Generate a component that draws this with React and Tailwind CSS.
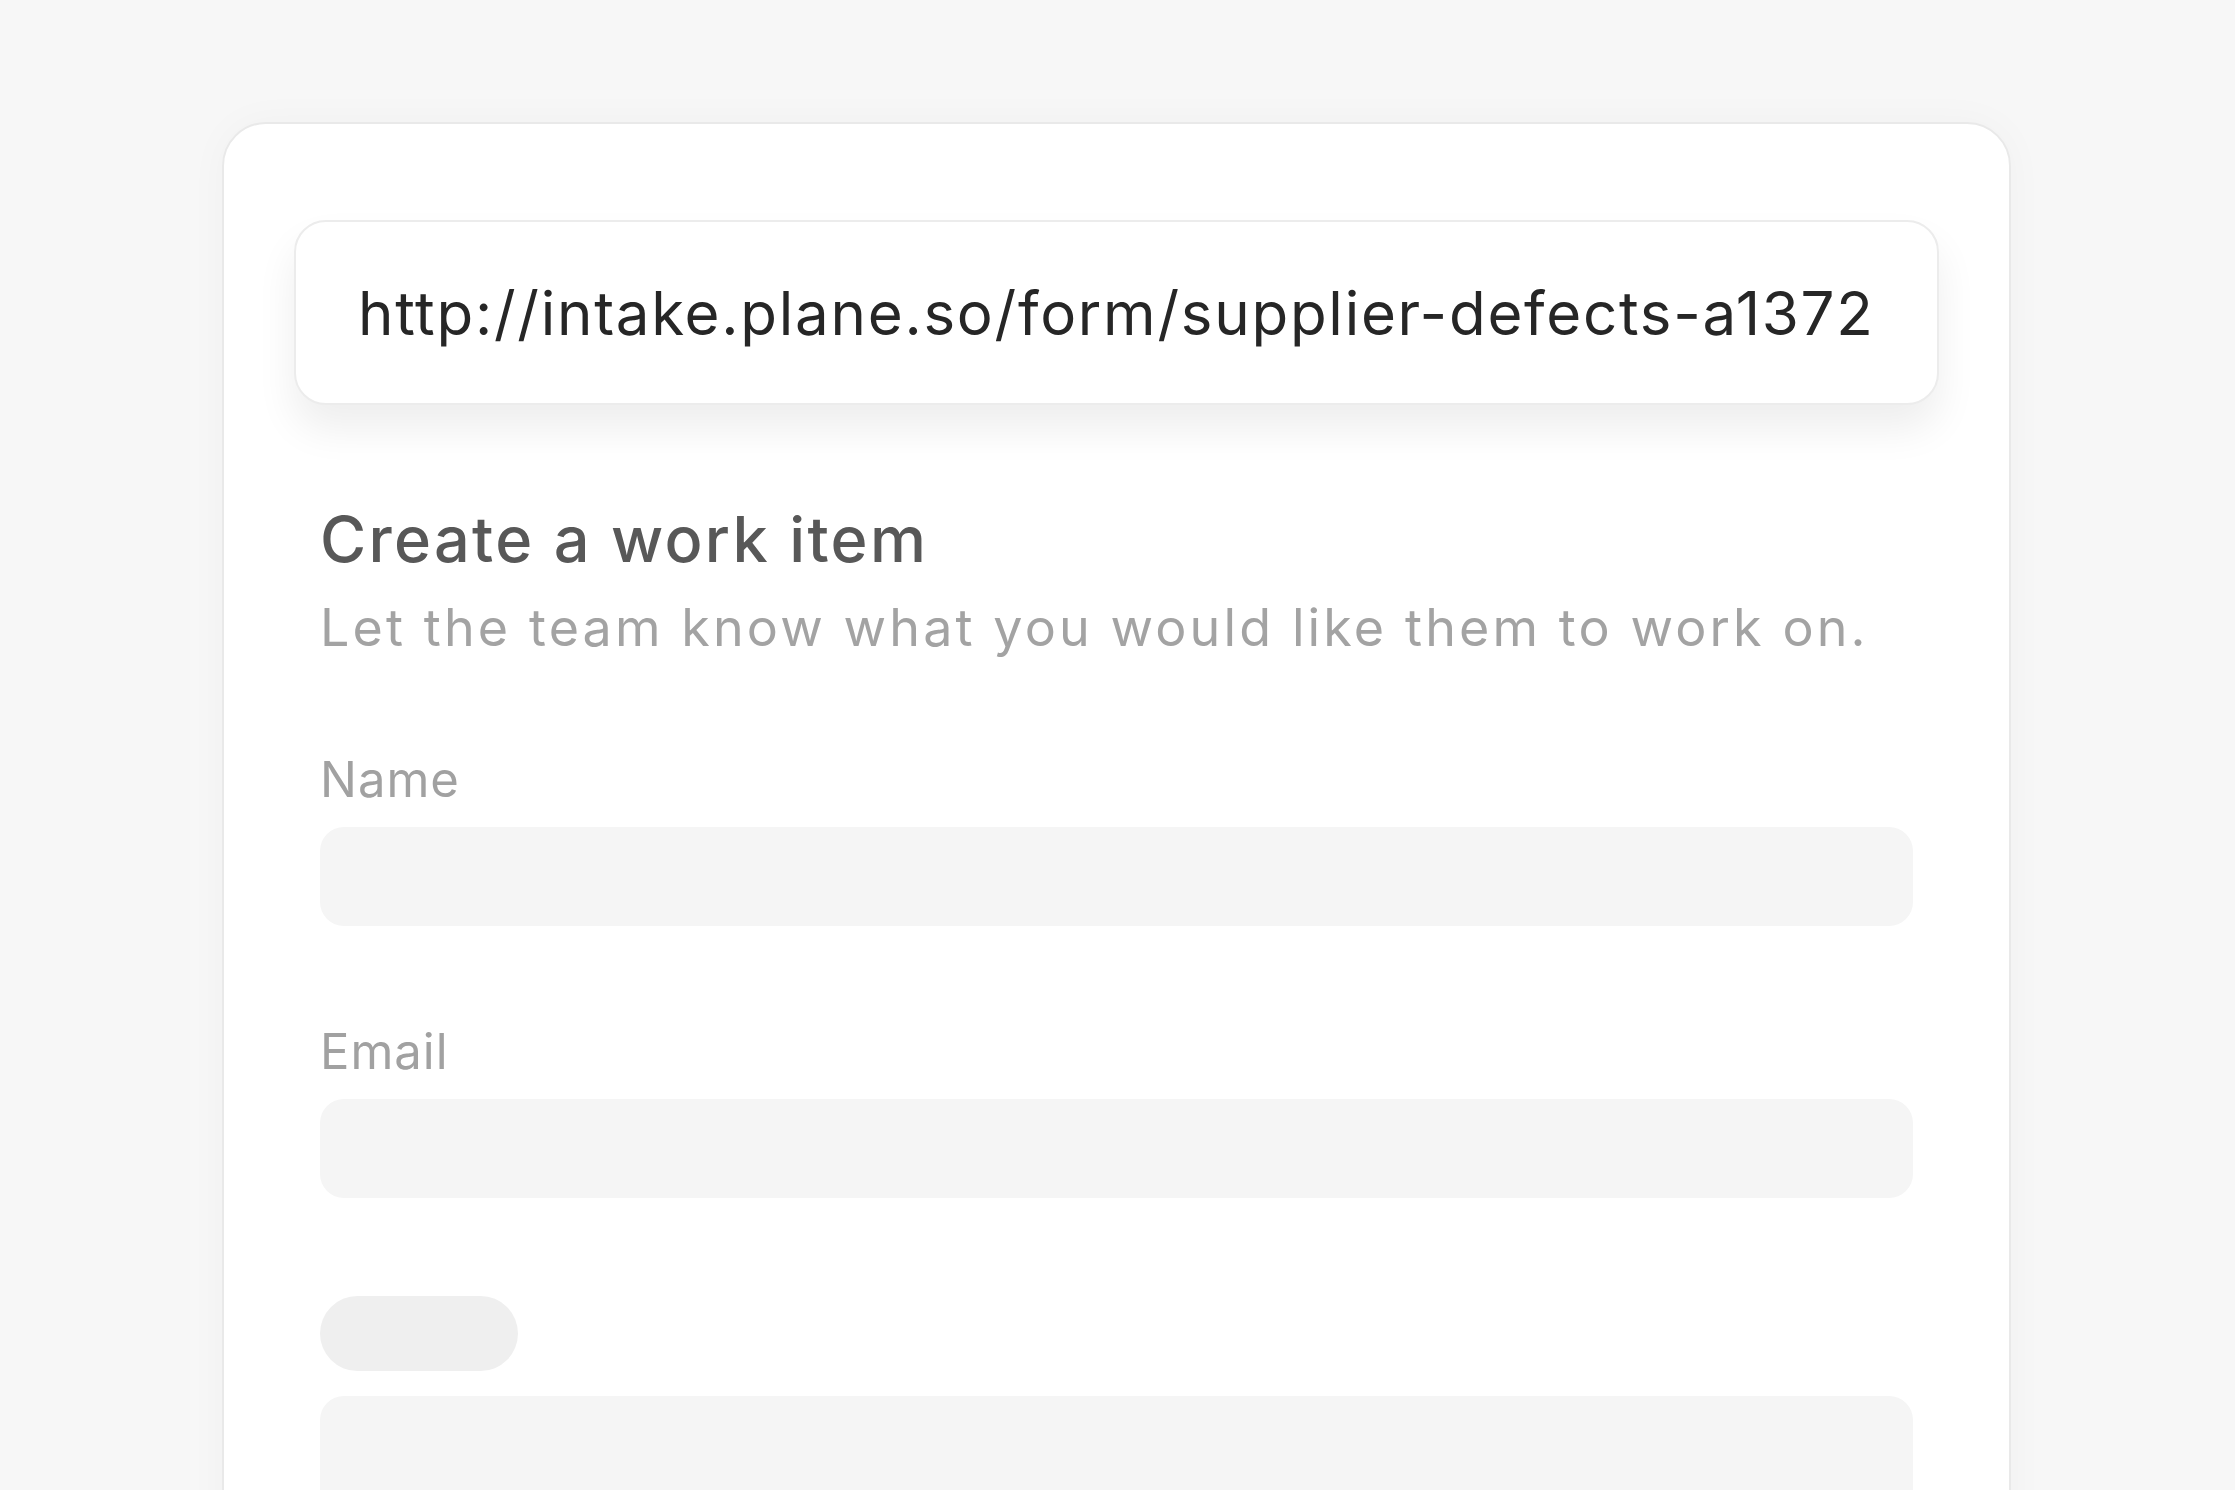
import React from 'react'

const font = { fontFamily: 'Inter, "Noto Sans", sans-serif' }

function Field({ label }) {
  return (
    <div className="flex flex-col">
      <div className="text-[49px] leading-none tracking-[0.02em] text-[#a1a1a1]">{label}</div>
      <div className="mt-[23px] h-[99px] rounded-[24px] bg-[#f5f5f5]" />
    </div>
  )
}

export default function App() {
  return (
    <div className="h-screen w-full overflow-hidden bg-[#f7f7f7]" style={font}>
      <div className="ml-[222px] mt-[122px] h-[1500px] w-[1789px] rounded-[44px] border-2 border-[#e9e9e9] bg-white px-[70px] pt-[96px] shadow-[0_0_40px_rgba(0,0,0,0.03)]">
        <div className="flex h-[185px] items-center rounded-[32px] border-2 border-[#ececec] bg-white pl-[62px] shadow-[0_24px_40px_rgba(0,0,0,0.07)]">
          <span className="text-[60px] leading-none tracking-[0.029em] text-[#262626]">http://intake.plane.so/form/supplier-defects-a1372</span>
        </div>

        <div className="px-[26px] pt-[103px]">
          <h1 className="text-[63px] leading-none font-medium tracking-[0.037em] text-[#585858]">Create a work item</h1>
          <p className="mt-[31px] text-[52px] leading-none tracking-[0.06em] text-[#a3a3a3]">
            Let the team know what you would like them to work on.
          </p>

          <div className="mt-[101px] flex flex-col gap-[101px]">
            <Field label="Name" />
            <Field label="Email" />
          </div>

          <div className="mt-[98px] h-[75px] w-[198px] rounded-full bg-[#efefef]" />
          <div className="mt-[25px] h-[140px] rounded-[24px] bg-[#f5f5f5]" />
        </div>
      </div>
    </div>
  )
}
